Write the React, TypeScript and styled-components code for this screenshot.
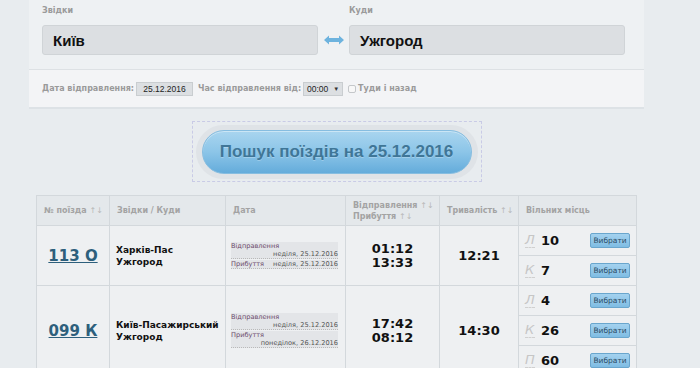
import React from "react";
import styled, { createGlobalStyle } from "styled-components";

const GlobalStyle = createGlobalStyle`
	html, body {
		margin: 0;
		padding: 0;
	}

	body {
		background: #e8ecef;
		font-family: "DejaVu Sans", Verdana, sans-serif;
		color: #222;
	}
`;

const Page = styled.div`
	width: 615px;
	margin-left: 29px;
`;

const Panel = styled.div`
	background: #eef1f3;
	box-shadow: 0 2px 0 #dde2e6;
`;

const Directions = styled.div`
	display: grid;
	grid-template-columns: 276px 31px 276px;
	padding: 5px 19px 14px 13px;
	border-bottom: 1px solid #dde1e4;
`;

const Field = styled.div`
	display: flex;
	flex-direction: column;
`;

const FieldLabel = styled.label`
	font-size: 8px;
	font-weight: bold;
	color: #9a9a9a;
	line-height: 12px;
	margin-bottom: 8px;
`;

const CityInput = styled.div`
	box-sizing: border-box;
	height: 30px;
	padding-left: 10px;
	display: flex;
	align-items: center;
	background: #dcdfe2;
	border: 1px solid #d0d4d7;
	border-radius: 3px;
	font-family: "Liberation Sans", Arial, sans-serif;
	font-weight: bold;
	font-size: 15px;
	color: #111;
`;

const Swap = styled.div`
	align-self: end;
	height: 30px;
	display: flex;
	align-items: center;
	justify-content: center;
`;

const Options = styled.div`
	display: flex;
	align-items: center;
	height: 37px;
	padding-left: 13px;
	background: #f3f4f6;
`;

const OptionLabel = styled.span`
	font-size: 8px;
	font-weight: bold;
	color: #9a9a9a;
	margin-right: 2px;
`;

const SmallBox = styled.span<{ width: number }>`
	box-sizing: border-box;
	width: ${(p) => p.width}px;
	height: 14px;
	display: inline-flex;
	align-items: center;
	justify-content: center;
	gap: 5px;
	background: #dcdfe2;
	border: 1px solid #c9cdd0;
	font-family: "Liberation Sans", Arial, sans-serif;
	font-size: 8.5px;
	color: #222;
	margin-right: 5px;
`;

const Caret = styled.span`
	font-size: 6px;
	color: #333;
`;

const Check = styled.span`
	box-sizing: border-box;
	width: 8px;
	height: 8px;
	border: 1px solid #c4c7ca;
	border-radius: 2px;
	background: #f7f7f7;
	margin-right: 2px;
`;

const SearchArea = styled.div`
	display: flex;
	justify-content: center;
	margin-top: 14px;
`;

const SearchFrame = styled.div`
	width: 290px;
	height: 61px;
	box-sizing: border-box;
	border: 1px dashed #c9cbe6;
	display: flex;
	align-items: center;
	justify-content: center;
`;

const SearchHalo = styled.div`
	width: 282px;
	height: 54px;
	border-radius: 27px;
	background: #dfe3e7;
	display: flex;
	align-items: center;
	justify-content: center;
`;

const SearchButton = styled.button`
	width: 270px;
	height: 44px;
	border-radius: 22px;
	border: 1px solid #86bde0;
	background: linear-gradient(#a9d5ef, #8cc5e8 50%, #64acdb);
	box-shadow: inset 0 1px 0 rgba(255, 255, 255, 0.4);
	font-family: "Liberation Sans", Arial, sans-serif;
	font-weight: bold;
	font-size: 17px;
	color: #3f7697;
	text-shadow: 0 1px 0 rgba(255, 255, 255, 0.25);
	padding: 0;
`;

const Trains = styled.table`
	width: 600px;
	margin: 13px 0 0 7px;
	border-collapse: collapse;
	table-layout: fixed;
`;

const HeadCell = styled.th<{ w: number }>`
	box-sizing: border-box;
	width: ${(p) => p.w}px;
	height: 30px;
	padding: 0 2px 0 7px;
	text-align: left;
	vertical-align: middle;
	white-space: nowrap;
	background: #e4e8eb;
	border: 1px solid #d3d8dc;
	font-size: 8px;
	font-weight: bold;
	line-height: 11px;
	color: #a3a3a3;
`;

const Sort = styled.span`
	font-weight: normal;
	color: #b8b8b8;
`;

const Cell = styled.td<{ center?: boolean; flush?: boolean }>`
	box-sizing: border-box;
	padding: ${(p) => (p.flush ? "0" : "0 6px")};
	text-align: ${(p) => (p.center ? "center" : "left")};
	vertical-align: middle;
	background: #eef0f2;
	border: 1px solid #d3d8dc;
`;

const TrainLink = styled.a`
	font-size: 15px;
	font-weight: bold;
	color: #2d5f7c;
	text-decoration: underline;
`;

const Stations = styled.div`
	font-size: 9px;
	font-weight: bold;
	line-height: 12px;
	color: #111;
`;

const DateBlock = styled.div`
	width: 107px;
	margin-left: -1px;
`;

const DateEntry = styled.div`
	display: flex;
	flex-wrap: wrap;
	background: #e3e5e8;
	border-bottom: 1px dotted #b9b9b9;
	margin-bottom: 1px;
	font-size: 6.6px;
	line-height: 8px;
`;

const DateLabel = styled.span`
	color: #6b4a6b;
`;

const DateValue = styled.span`
	margin-left: auto;
	color: #555;
`;

const Times = styled.div`
	font-size: 13px;
	font-weight: bold;
	line-height: 14px;
	color: #111;
`;

const SeatRow = styled.div`
	height: 29px;
	display: flex;
	align-items: center;
	padding: 0 6px;
	border-top: 1px solid #d3d8dc;

	&:first-child {
		border-top: none;
	}
`;

const SeatClass = styled.span`
	font-family: "DejaVu Sans", sans-serif;
	font-style: italic;
	font-size: 13px;
	color: #c6c6c6;
	line-height: 14px;
	border-bottom: 1px dashed #d0d0d0;
	margin-right: 6px;
	width: 10px;
`;

const SeatCount = styled.span`
	font-size: 13px;
	font-weight: bold;
	color: #111;
`;

const Pick = styled.button`
	margin-left: auto;
	width: 40px;
	height: 15px;
	padding: 0;
	border: 1px solid #6aa6cd;
	border-radius: 2px;
	background: linear-gradient(#a4d2ef, #7fbce3);
	font-family: "DejaVu Sans", sans-serif;
	font-size: 7.5px;
	color: #2b4b63;
`;

interface Seat {
	kind: string;
	count: number;
}

interface Train {
	number: string;
	from: string;
	to: string;
	departDate: string;
	arriveDate: string;
	depart: string;
	arrive: string;
	duration: string;
	seats: Seat[];
}

const trains: Train[] = [
	{
		number: "113 О",
		from: "Харків-Пас",
		to: "Ужгород",
		departDate: "неділя, 25.12.2016",
		arriveDate: "неділя, 25.12.2016",
		depart: "01:12",
		arrive: "13:33",
		duration: "12:21",
		seats: [
			{ kind: "Л", count: 10 },
			{ kind: "К", count: 7 }
		]
	},
	{
		number: "099 К",
		from: "Київ-Пасажирський",
		to: "Ужгород",
		departDate: "неділя, 25.12.2016",
		arriveDate: "понеділок, 26.12.2016",
		depart: "17:42",
		arrive: "08:12",
		duration: "14:30",
		seats: [
			{ kind: "Л", count: 4 },
			{ kind: "К", count: 26 },
			{ kind: "П", count: 60 }
		]
	}
];

const SwapArrow = () => (
	<svg width="20" height="10" viewBox="0 0 20 10">
		<path d="M0 5 L5 0.5 L5 3 L15 3 L15 0.5 L20 5 L15 9.5 L15 7 L5 7 L5 9.5 Z" fill="#6db3de" />
	</svg>
);

const App = () => {
	return (
		<>
			<GlobalStyle />
			<Page>
				<Panel>
					<Directions>
						<Field>
							<FieldLabel>Звідки</FieldLabel>
							<CityInput>Київ</CityInput>
						</Field>
						<Swap>
							<SwapArrow />
						</Swap>
						<Field>
							<FieldLabel>Куди</FieldLabel>
							<CityInput>Ужгород</CityInput>
						</Field>
					</Directions>
					<Options>
						<OptionLabel>Дата відправлення:</OptionLabel>
						<SmallBox width={57}>25.12.2016</SmallBox>
						<OptionLabel>Час відправлення від:</OptionLabel>
						<SmallBox width={40}>
							00:00 <Caret>▼</Caret>
						</SmallBox>
						<Check />
						<OptionLabel>Туди і назад</OptionLabel>
					</Options>
				</Panel>

				<SearchArea>
					<SearchFrame>
						<SearchHalo>
							<SearchButton>Пошук поїздів на 25.12.2016</SearchButton>
						</SearchHalo>
					</SearchFrame>
				</SearchArea>

				<Trains>
					<thead>
						<tr>
							<HeadCell w={73}>
								№ поїзда <Sort>↑↓</Sort>
							</HeadCell>
							<HeadCell w={116}>Звідки / Куди</HeadCell>
							<HeadCell w={120}>Дата</HeadCell>
							<HeadCell w={94}>
								Відправлення <Sort>↑↓</Sort>
								<br />
								Прибуття <Sort>↑↓</Sort>
							</HeadCell>
							<HeadCell w={79}>
								Тривалість <Sort>↑↓</Sort>
							</HeadCell>
							<HeadCell w={118}>Вільних місць</HeadCell>
						</tr>
					</thead>
					<tbody>
						{trains.map((t) => (
							<tr key={t.number}>
								<Cell center>
									<TrainLink>{t.number}</TrainLink>
								</Cell>
								<Cell>
									<Stations>
										{t.from}
										<br />
										{t.to}
									</Stations>
								</Cell>
								<Cell>
									<DateBlock>
										<DateEntry>
											<DateLabel>Відправлення</DateLabel>
											<DateValue>{t.departDate}</DateValue>
										</DateEntry>
										<DateEntry>
											<DateLabel>Прибуття</DateLabel>
											<DateValue>{t.arriveDate}</DateValue>
										</DateEntry>
									</DateBlock>
								</Cell>
								<Cell center>
									<Times>
										{t.depart}
										<br />
										{t.arrive}
									</Times>
								</Cell>
								<Cell center>
									<Times>{t.duration}</Times>
								</Cell>
								<Cell flush>
									{t.seats.map((s) => (
										<SeatRow key={s.kind}>
											<SeatClass>{s.kind}</SeatClass>
											<SeatCount>{s.count}</SeatCount>
											<Pick>Вибрати</Pick>
										</SeatRow>
									))}
								</Cell>
							</tr>
						))}
					</tbody>
				</Trains>
			</Page>
		</>
	);
};

export default App;
